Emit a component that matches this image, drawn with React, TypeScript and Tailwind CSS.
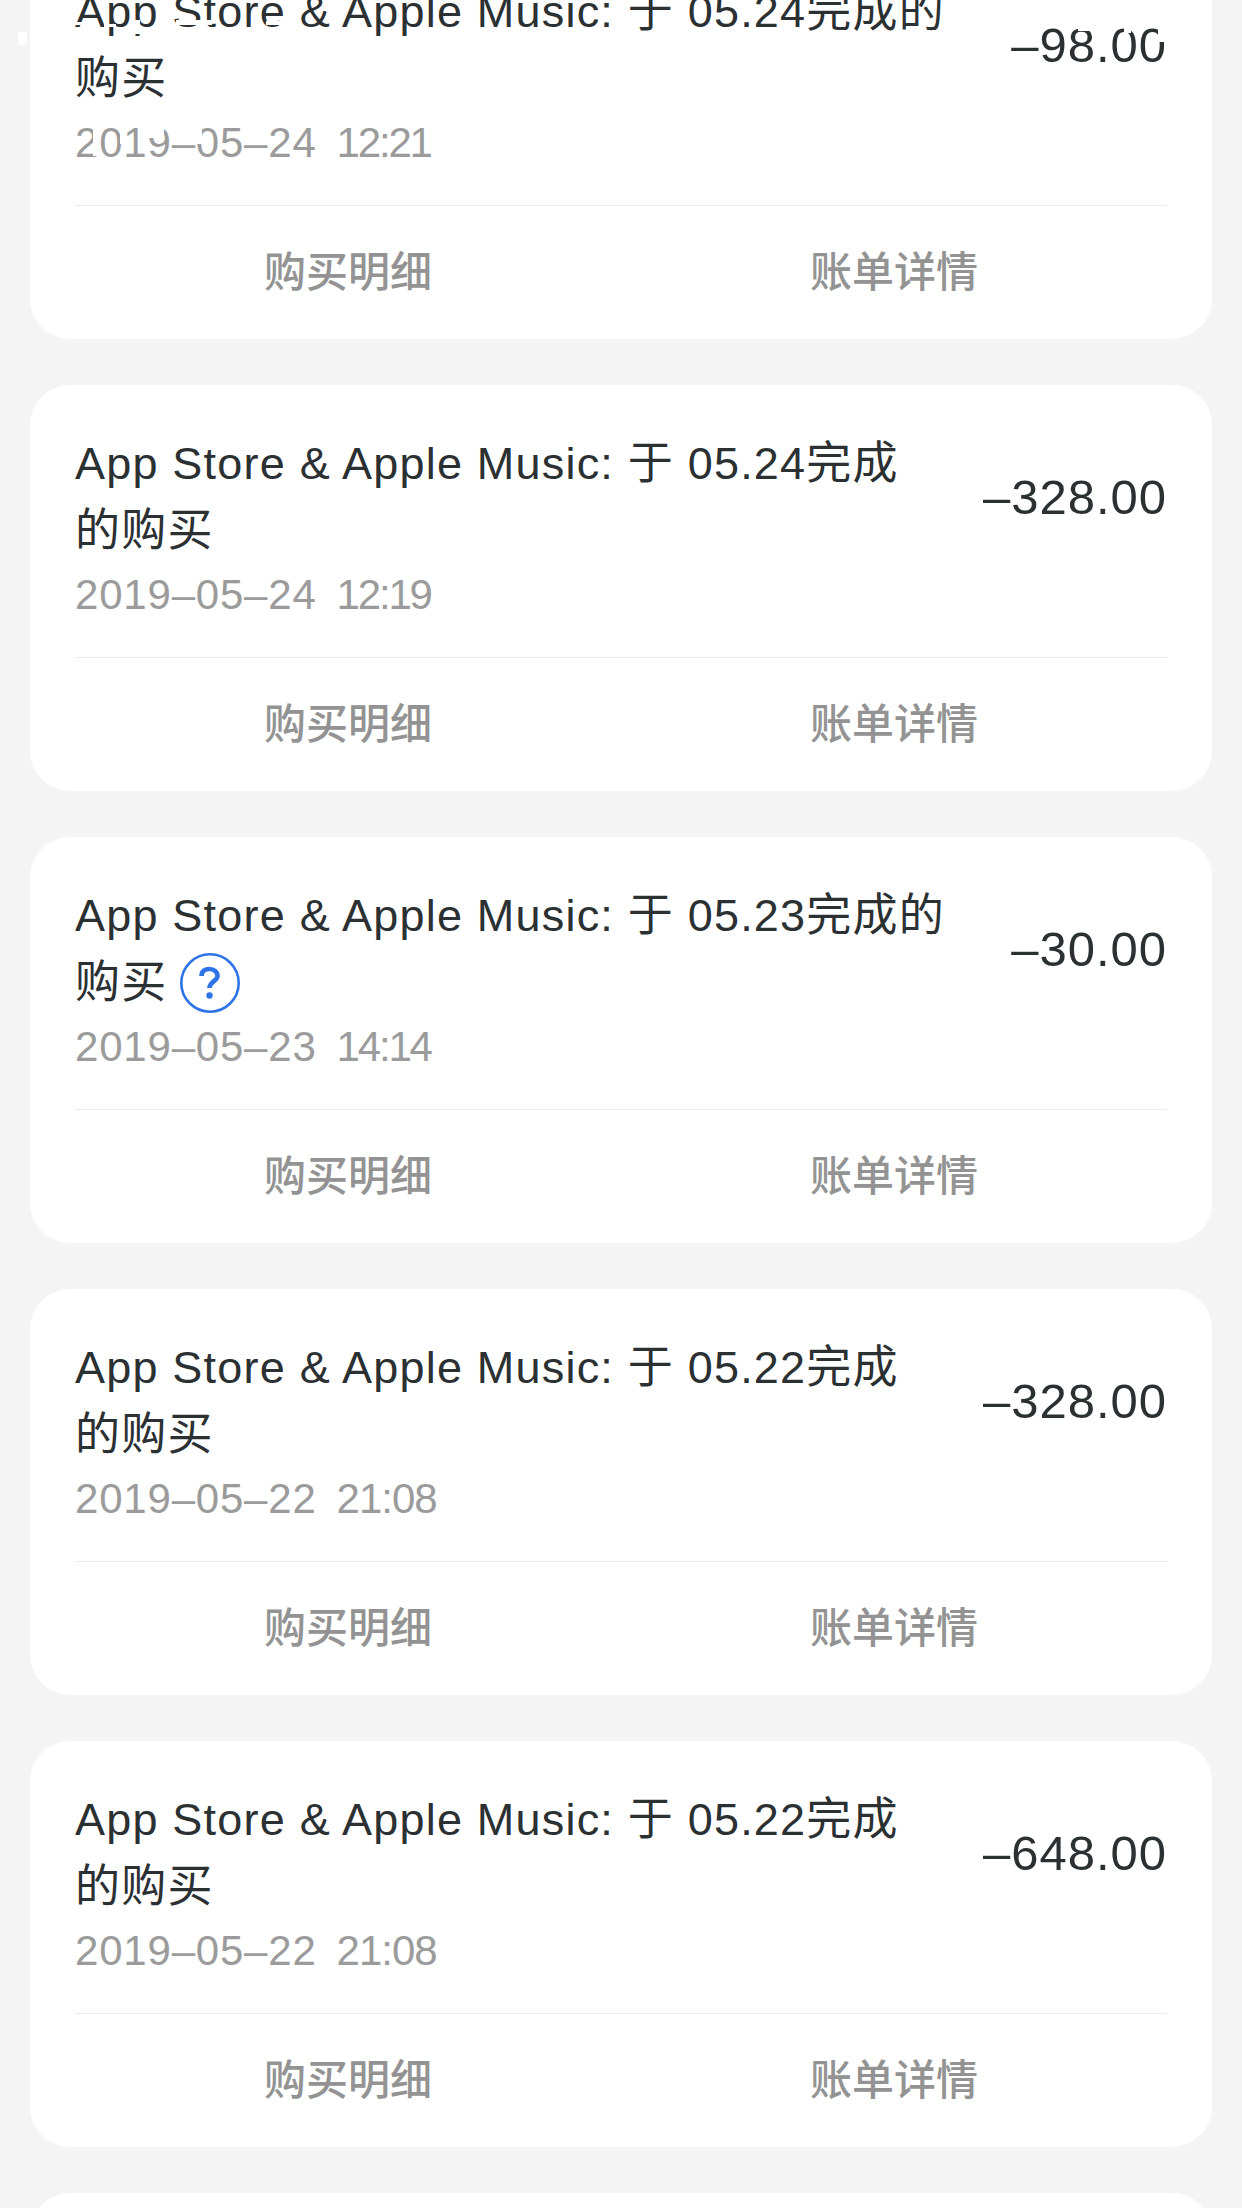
const FONT = "font-['Liberation_Sans','Noto_Sans_CJK_SC',sans-serif]";

type Row = { day: string; time: string; timeClass: string; pre: string; tail: string; amount: string; help?: boolean };

const NARROW = "tracking-[-2.2px]";
const WIDE = "tracking-[-1px]";

const rows: Row[] = [
  { day: "2019–05–24", time: "12:21", timeClass: NARROW, pre: "App Store & Apple Music: 于 05.24完成的", tail: "购买", amount: "–98.00" },
  { day: "2019–05–24", time: "12:19", timeClass: NARROW, pre: "App Store & Apple Music: 于 05.24完成", tail: "的购买", amount: "–328.00" },
  { day: "2019–05–23", time: "14:14", timeClass: NARROW, pre: "App Store & Apple Music: 于 05.23完成的", tail: "购买", amount: "–30.00", help: true },
  { day: "2019–05–22", time: "21:08", timeClass: WIDE, pre: "App Store & Apple Music: 于 05.22完成", tail: "的购买", amount: "–328.00" },
  { day: "2019–05–22", time: "21:08", timeClass: WIDE, pre: "App Store & Apple Music: 于 05.22完成", tail: "的购买", amount: "–648.00" },
];

function Help() {
  return (
    <svg viewBox="0 0 60 60" className="ml-[13px] h-[60px] w-[60px] shrink-0" fill="none">
      <circle cx="30" cy="30" r="28.7" stroke="#2f74e6" strokeWidth="2.6" />
      <path d="M21.5 23C21.5 18 25 16 29.5 16C34 16 37.5 19 37.5 23C37.5 28 29.5 28.5 29.5 35" stroke="#2f74e6" strokeWidth="4.6" />
      <circle cx="29.5" cy="42.5" r="3.2" fill="#2f74e6" />
    </svg>
  );
}

function Card({ row }: { row: Row }) {
  return (
    <div className="h-[406px] rounded-[40px] bg-white px-[45px]">
      <div className="h-[273px] border-b border-[#ececec] pt-[45px]">
        <div className="flex h-[134px] items-center justify-between whitespace-nowrap">
          <div className="text-[45px] leading-[67px] tracking-[1.2px] text-[#2b3033]">
            <div>{row.pre}</div>
            <div className="flex h-[67px] items-center">
              {row.tail}
              {row.help && <Help />}
            </div>
          </div>
          <div className="text-[49px] leading-[67px] tracking-[1px] text-[#2b3033]">{row.amount}</div>
        </div>
        <div className="flex gap-[20px] text-[42px] leading-[62px] tracking-[0.8px] text-[#9b9b9b]">
          <span>{row.day}</span>
          <span className={row.timeClass}>{row.time}</span>
        </div>
      </div>
      <div className="grid h-[132px] grid-cols-2 items-center text-center text-[42px] font-medium text-[#939393]">
        <div>购买明细</div>
        <div>账单详情</div>
      </div>
    </div>
  );
}

function StatusResidue() {
  return (
    <svg className="absolute left-0 top-0 h-[170px] w-[1242px]" viewBox="0 0 1242 170" fill="#ffffff">
      <rect x="18" y="32" width="9" height="13" rx="2" />
      <rect x="76" y="22" width="22" height="3" />
      <rect x="104" y="24" width="12" height="3" />
      <rect x="132" y="20" width="8" height="14" />
      <rect x="176" y="20" width="36" height="5" />
      <rect x="266" y="21" width="16" height="4" />
      <rect x="1078" y="26" width="12" height="5" />
      <rect x="1124" y="28" width="7" height="5" />
      <rect x="1158" y="28" width="6" height="14" />
      <rect x="93" y="128" width="7" height="28" />
      <rect x="120" y="128" width="6" height="16" />
      <rect x="140" y="128" width="24" height="10" />
      <rect x="196" y="128" width="6" height="16" />
    </svg>
  );
}

export default function App() {
  return (
    <div className={`relative h-[2208px] w-[1242px] overflow-hidden bg-[#f4f4f4] ${FONT}`}>
      <div className="mt-[-67px] flex flex-col gap-[46px] px-[30px]">
        {rows.map((r, i) => (
          <Card key={i} row={r} />
        ))}
        <div className="h-[100px] rounded-[40px] bg-white" />
      </div>
      <StatusResidue />
    </div>
  );
}
